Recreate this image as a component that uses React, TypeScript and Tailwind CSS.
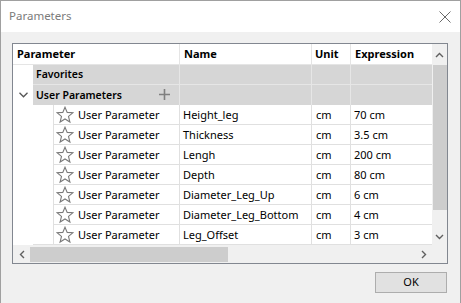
import React from "react";

const rows = [
  ["Height_leg", "cm", "70 cm"],
  ["Thickness", "cm", "3.5 cm"],
  ["Lengh", "cm", "200 cm"],
  ["Depth", "cm", "80 cm"],
  ["Diameter_Leg_Up", "cm", "6 cm"],
  ["Diameter_Leg_Bottom", "cm", "4 cm"],
  ["Leg_Offset", "cm", "3 cm"],
];

function Star() {
  return (
    <svg width="18" height="18" viewBox="0 0 18 18" className="shrink-0">
      <polygon
        points="9,1.2 11.2,6.4 16.8,6.8 12.5,10.4 13.9,16 9,13 4.1,16 5.5,10.4 1.2,6.8 6.8,6.4"
        fill="none"
        stroke="#7a7a7a"
        strokeWidth="1.1"
        strokeLinejoin="miter"
      />
    </svg>
  );
}

export default function App() {
  return (
    <div
      className="w-[461px] h-[303px] bg-[#f0f0f0] border-x border-t border-[#a0a0a0] flex flex-col text-[11px] text-black"
      style={{ fontFamily: '"Noto Sans", "Open Sans", sans-serif' }}
    >
      <div className="h-[31px] bg-white flex items-center justify-between pl-[8px] pr-[9px] shrink-0">
        <span className="text-[#7b7b7b] text-[11.5px] pb-[1px]">Parameters</span>
        <svg width="12" height="12" viewBox="0 0 12 12">
          <path d="M0.5 0.5 L11.5 11.5 M11.5 0.5 L0.5 11.5" stroke="#6a6a6a" strokeWidth="1" />
        </svg>
      </div>
      <div className="pl-[11px] pr-[12px] pt-[11px] flex flex-col">
        <div className="h-[221px] border border-[#828790] bg-white flex flex-col">
          <div className="flex h-[201px]">
            <div className="w-[419px] flex flex-col">
              {/* header */}
              <div className="h-[21px] flex items-center font-bold border-b border-[#e5e5e5]">
                <div className="w-[167px] pl-[4px] pt-[1px] h-full flex items-center border-r border-[#e5e5e5]">Parameter</div>
                <div className="w-[132px] pl-[4px] pt-[1px] h-full flex items-center border-r border-[#e5e5e5]">Name</div>
                <div className="w-[39px] pl-[3px] pt-[1px] h-full flex items-center border-r border-[#e5e5e5]">Unit</div>
                <div className="w-[81px] pl-[4px] pt-[1px] h-full flex items-center">Expression</div>
              </div>
              {/* favorites */}
              <div className="h-[20px] flex">
                <div className="w-[20px]" />
                <div className="flex-1 flex bg-[#d6d6d6] border-b border-[#e6e6e6] text-[10.5px] font-semibold">
                  <div className="w-[147px] pl-[3px] flex items-center border-r border-[#e6e6e6]">Favorites</div>
                  <div className="w-[132px] border-r border-[#e6e6e6]" />
                  <div className="w-[39px] border-r border-[#e6e6e6]" />
                  <div className="w-[81px]" />
                </div>
              </div>
              {/* user parameters */}
              <div className="h-[20px] flex">
                <div className="w-[20px] flex items-center justify-center pl-[1px]">
                  <svg width="9" height="6" viewBox="0 0 9 6">
                    <path d="M0.5 0.8 L4.5 4.8 L8.5 0.8" fill="none" stroke="#555" strokeWidth="1.3" />
                  </svg>
                </div>
                <div className="flex-1 flex bg-[#d6d6d6] text-[10.5px] font-semibold">
                  <div className="w-[147px] pl-[3px] pr-[9px] flex items-center justify-between border-r border-[#e6e6e6]">
                    <span className="pt-[1px]">User Parameters</span>
                    <svg width="11" height="11" viewBox="0 0 11 11" className="mb-[2px]">
                      <path d="M5.5 0 V11 M0 5.5 H11" stroke="#7f7f7f" strokeWidth="1.6" />
                    </svg>
                  </div>
                  <div className="w-[132px] border-r border-[#e6e6e6]" />
                  <div className="w-[39px] border-r border-[#e6e6e6]" />
                  <div className="w-[81px]" />
                </div>
              </div>
              {rows.map((r, i) => (
                <div key={i} className="h-[20px] flex">
                  <div className="w-[20px]" />
                  <div className={`w-[20px] ${i === rows.length - 1 ? "border-b border-[#e0e0e0]" : ""}`} />
                  <div className="flex-1 flex border-b border-[#e0e0e0]">
                    <div className="w-[127px] flex items-center border-l border-r border-[#e0e0e0] pl-[2px] gap-[4px]">
                      <Star />
                      <span className="pt-[1px]">User Parameter</span>
                    </div>
                    <div className="w-[132px] pl-[3px] pt-[1px] flex items-center border-r border-[#e0e0e0]">{r[0]}</div>
                    <div className="w-[39px] pl-[4px] pt-[1px] flex items-center border-r border-[#e0e0e0]">{r[1]}</div>
                    <div className="w-[81px] pl-[3px] pt-[1px] flex items-center">{r[2]}</div>
                  </div>
                </div>
              ))}
            </div>
            {/* vertical scrollbar */}
            <div className="w-[15px] bg-[#f0f0f0] flex flex-col items-center">
              <div className="h-[21px] w-full flex items-center justify-center">
                <svg width="9" height="6" viewBox="0 0 9 6">
                  <path d="M1 5 L4.5 1.5 L8 5" fill="none" stroke="#606060" strokeWidth="1.4" />
                </svg>
              </div>
              <div className="w-[14px] h-[145px] bg-[#cdcdcd]" />
              <div className="flex-1" />
              <div className="h-[17px] w-full flex items-center justify-center">
                <svg width="9" height="6" viewBox="0 0 9 6">
                  <path d="M1 1 L4.5 4.5 L8 1" fill="none" stroke="#606060" strokeWidth="1.4" />
                </svg>
              </div>
            </div>
          </div>
          {/* horizontal scrollbar */}
          <div className="h-[18px] bg-[#f0f0f0] flex items-center">
            <div className="w-[17px] h-full flex items-center justify-center">
              <svg width="6" height="9" viewBox="0 0 6 9">
                <path d="M5 1 L1.5 4.5 L5 8" fill="none" stroke="#606060" strokeWidth="1.4" />
              </svg>
            </div>
            <div className="w-[198px] h-[15px] bg-[#cdcdcd] mt-[1px]" />
            <div className="flex-1" />
            <div className="w-[17px] h-full flex items-center justify-center mr-[15px]">
              <svg width="6" height="9" viewBox="0 0 6 9">
                <path d="M1 1 L4.5 4.5 L1 8" fill="none" stroke="#606060" strokeWidth="1.4" />
              </svg>
            </div>
          </div>
        </div>
        <div className="flex justify-end mt-[8px] pr-[1px]">
          <button className="w-[72px] h-[21px] bg-[#e1e1e1] border border-[#adadad] text-[11px] flex items-center justify-center">
            OK
          </button>
        </div>
      </div>
    </div>
  );
}
